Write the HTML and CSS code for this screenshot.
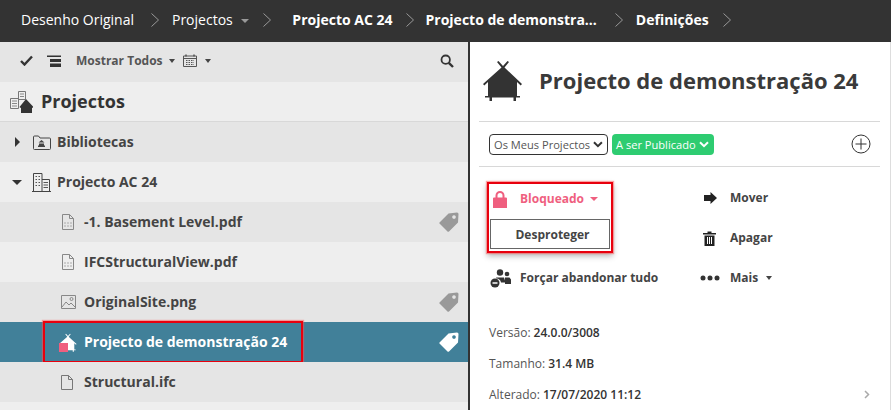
FILE: index.html
```html
<!DOCTYPE html>
<html lang="pt">
<head>
  <meta charset="UTF-8">
  <title>Projecto de demonstração 24</title>
  <link rel="stylesheet" href="styles.css">
</head>
<body>
  <svg class="defs" width="0" height="0">
    <symbol id="hut" viewBox="0 0 40 41">
      <path d="M14 2l1.500-1L20 6l4.500-5L26 2l-4.500 5.500L39 24l-1.300 1.500L34 22v14h3v1.500h-4V41h-2.500v-3.500H9V41H6.500v-3.500H2V36h3V22l-3.700 3.500L0 24 18.500 7.500z"/>
    </symbol>
    <symbol id="tag" viewBox="0 0 20 20">
      <path fill-rule="evenodd" d="M9.500 1.500L18 .5Q19.500.5 19.500 2L19 10.500 10 19.500Q9 20 8.500 19.500L.5 11.500Q0 11 .5 10.500zM15 3.200a1.800 1.800 0 1 0 .01 0z"/>
    </symbol>
    <symbol id="pdf" viewBox="0 0 14 16">
      <path d="M1.500.5h7l4 4v11h-11zM8.500.5v4h4" fill="none" stroke="#888"/>
      <path d="M3 9h8M3 12h8" stroke="#aaa" stroke-dasharray="2 1"/>
    </symbol>
    <symbol id="chev" viewBox="0 0 8 14">
      <path d="M.5.500L7.500 7 .5 13.500" fill="none" stroke="#999"/>
    </symbol>
  </svg>

  <nav class="crumbs">
    <span class="crumb">Desenho Original</span>
    <svg class="sep sep-wide" width="8" height="14"><use href="#chev"/></svg>
    <span class="crumb">Projectos <i class="caret caret-grey"></i></span>
    <svg class="sep sep-next" width="8" height="14"><use href="#chev"/></svg>
    <span class="crumb crumb-b">Projecto AC 24</span>
    <svg class="sep sep-tight" width="8" height="14"><use href="#chev"/></svg>
    <span class="crumb crumb-b">Projecto de demonstra...</span>
    <svg class="sep sep-wide sep-last" width="8" height="14"><use href="#chev"/></svg>
    <span class="crumb crumb-b">Definições</span>
    <svg class="sep" width="8" height="14"><use href="#chev"/></svg>
  </nav>

  <main class="main">
    <section class="left">
      <div class="toolbar">
        <svg class="tool-check" width="13" height="11" viewBox="0 0 13 11"><path d="M1 6l3.500 3.500L12 1.500" fill="none" stroke="#333" stroke-width="2.400"/></svg>
        <svg class="tool-list" width="14" height="12" viewBox="0 0 14 12"><path d="M0 .5h14V2H0zM3 4h11v3H3zM3 8.500h11V12H3z" fill="#333"/></svg>
        <span class="tool-label">Mostrar Todos</span><i class="caret caret-dark"></i>
        <svg class="tool-cal" width="14" height="13" viewBox="0 0 14 13"><path d="M.5 2h13v10.500H.5zM.5 4.500h13" fill="none" stroke="#555"/><path d="M3 .5v2M11 .5v2" stroke="#555" stroke-width="1.500"/><path d="M3 6.500h8M3 8.500h8M3 10.500h8" stroke="#555" stroke-dasharray="1.500 1"/></svg>
        <i class="caret caret-dark"></i>
        <svg class="tool-search" width="14" height="14" viewBox="0 0 14 14"><circle cx="5.700" cy="5.700" r="4.200" fill="none" stroke="#333" stroke-width="1.800"/><path d="M8.800 8.800L13 13" stroke="#333" stroke-width="2.400"/></svg>
      </div>

      <div class="tree-title">
        <svg width="24" height="24" viewBox="0 0 24 24"><path d="M1.500 8.500h8v10h-8zM9.500 1.500h7v8h-7z" fill="#eee" stroke="#777"/><path d="M3 11h5M3 13.500h5M3 16h5M11 4h4M11 6.500h4" stroke="#888"/><path d="M17 9l7.500 8-1 1-.5-.500V23H12v-5.500l-.5.500-1-1z" fill="#333"/></svg>
        <span>Projectos</span>
      </div>

      <ul class="tree">
        <li class="row row-d">
          <i class="tri-right"></i>
          <svg class="row-icon" width="19" height="15" viewBox="0 0 19 15"><path d="M2.500 1h4l1.500 2h9.500a1 1 0 0 1 1 1v9.500a1 1 0 0 1-1 1h-15a1 1 0 0 1-1-1v-11.500a1 1 0 0 1 1-1z" fill="none" stroke="#444"/><path d="M9.500 5l3 2.500h-6zM7 8.500h5v2H7zM6 10.500h7V12H6z" fill="#444"/></svg>
          <span class="row-text">Bibliotecas</span>
        </li>
        <li class="row row-l">
          <i class="tri-down"></i>
          <svg class="row-icon row-icon-tall" width="19" height="19" viewBox="0 0 19 19"><path d="M1.500 18V.5h8.500V18M10 6.500h7.500V18M0 18.500h19" fill="none" stroke="#444"/><path d="M3.500 3.500h1.500M6.500 3.500H8M3.500 6.500h1.500M6.500 6.500H8M3.500 9.500h1.500M6.500 9.500H8M3.500 12.500h1.500M6.500 12.500H8M11.500 9.500h4.500M11.500 12h4.500M11.500 14.500h4.500" stroke="#555"/></svg>
          <span class="row-text">Projecto AC 24</span>
        </li>
        <li class="row row-d row-file">
          <svg class="file-icon" width="14" height="16"><use href="#pdf"/></svg>
          <span class="row-text">-1. Basement Level.pdf</span>
          <svg class="row-tag" width="20" height="20"><use href="#tag"/></svg>
        </li>
        <li class="row row-l row-file">
          <svg class="file-icon" width="14" height="16"><use href="#pdf"/></svg>
          <span class="row-text">IFCStructuralView.pdf</span>
        </li>
        <li class="row row-d row-file">
          <svg class="file-icon" width="15" height="14" viewBox="0 0 15 14"><path d="M.5.500h14v13H.5z" fill="none" stroke="#888"/><path d="M1 12l4-5 3 3 2-2 4 4" fill="none" stroke="#888"/><circle cx="10.500" cy="4" r="1.500" fill="none" stroke="#888"/></svg>
          <span class="row-text">OriginalSite.png</span>
          <svg class="row-tag" width="20" height="20"><use href="#tag"/></svg>
        </li>
        <li class="row row-sel row-file">
          <div class="sel-icon">
            <svg width="18" height="19"><use href="#hut"/></svg>
            <i class="lock-mark"></i>
          </div>
          <span class="row-text">Projecto de demonstração 24</span>
          <svg class="row-tag" width="20" height="20"><use href="#tag"/></svg>
          <div class="mark mark-row"></div>
        </li>
        <li class="row row-d row-file">
          <svg class="file-icon" width="12" height="15" viewBox="0 0 12 15"><path d="M.5.500h7l4 4v10h-11zM7.500.500v4h4" fill="none" stroke="#777"/></svg>
          <span class="row-text">Structural.ifc</span>
        </li>
        <li class="row row-l row-rest"></li>
      </ul>
    </section>

    <section class="right">
      <header class="head">
        <svg class="head-icon" width="40" height="41"><use href="#hut"/></svg>
        <h1>Projecto de demonstração 24</h1>
      </header>

      <div class="filters">
        <span class="pill pill-outline">Os Meus Projectos <svg width="10" height="7" viewBox="0 0 10 7"><path d="M1 1.200l4 4 4-4" fill="none" stroke="#333" stroke-width="2"/></svg></span>
        <span class="pill pill-green">A ser Publicado <svg width="10" height="7" viewBox="0 0 10 7"><path d="M1 1.200l4 4 4-4" fill="none" stroke="#fff" stroke-width="2"/></svg></span>
        <svg class="plus" width="20" height="20" viewBox="0 0 20 20"><circle cx="10" cy="10" r="9" fill="none" stroke="#333"/><path d="M4.500 10h11M10 4.500v11" stroke="#333"/></svg>
      </div>

      <div class="actions">
        <div class="col col-a">
          <div class="lock-box">
            <div class="act act-lock">
              <svg class="act-icon" width="14" height="17" viewBox="0 0 14 17"><path d="M3.500 7V4.500a3.500 3.500 0 0 1 7 0V7" fill="none" stroke="#ef5f7f" stroke-width="2"/><path d="M1 6.500h12a1 1 0 0 1 1 1V17H0V7.500a1 1 0 0 1 1-1z" fill="#ef5f7f"/></svg>
              <span>Bloqueado</span><i class="caret caret-pink"></i>
            </div>
            <div class="unlock">Desproteger</div>
          </div>
          <div class="act act-force">
            <svg class="act-icon" width="21" height="19" viewBox="0 0 21 19"><circle cx="10" cy="3.500" r="3.200" fill="#333"/><circle cx="17" cy="5" r="2.300" fill="#333"/><path d="M6 8.500h8l1 3v2H11a5 5 0 0 0-4.500-4zM15 8.500h4.500l1.500 2V15h-6z" fill="#333"/><circle cx="5" cy="14" r="4.500" fill="#333"/><path d="M2.500 14h5" stroke="#fff" stroke-width="1.500"/></svg>
            <span>Forçar abandonar tudo</span>
          </div>
        </div>
        <div class="col col-b">
          <div class="act"><svg class="act-icon" width="13" height="12" viewBox="0 0 13 12"><path d="M0 3h6.500V0L13 6l-6.500 6V9H0z" fill="#222"/></svg><span>Mover</span></div>
          <div class="act"><svg class="act-icon" width="13" height="15" viewBox="0 0 13 15"><path d="M0 2h4.500V.500h4V2H13v1.500H0z" fill="#222"/><path d="M1.500 4.500h10V15h-10z" fill="#222"/><path d="M4.500 6v7M6.500 6v7M8.500 6v7" stroke="#fff"/></svg><span>Apagar</span></div>
          <div class="act"><svg class="act-icon" width="20" height="6" viewBox="0 0 20 6"><circle cx="3" cy="3" r="2.500" fill="#333"/><circle cx="10" cy="3" r="2.500" fill="#333"/><circle cx="17" cy="3" r="2.500" fill="#333"/></svg><span>Mais</span><i class="caret caret-dark"></i></div>
        </div>
      </div>

      <dl class="meta">
        <div class="meta-row">Versão: <b>24.0.0/3008</b></div>
        <div class="meta-row">Tamanho: <b>31.4 MB</b></div>
        <div class="meta-row">Alterado: <b>17/07/2020 11:12</b><svg class="more" width="6" height="9" viewBox="0 0 6 9"><path d="M1 1l3.500 3.500L1 8" fill="none" stroke="#aaa" stroke-width="1.500"/></svg></div>
      </dl>
    </section>
  </main>
</body>
</html>
```

FILE: styles.css
```css
* {
  box-sizing: border-box;
}
html, body {
  margin: 0;
  height: 100%;
  overflow: hidden;
}
body {
  font-family: "Open Sans", "Liberation Sans", sans-serif;
  color: #333;
  background: #fff;
}
.defs {
  position: absolute;
}
.crumbs {
  height: 42px;
  background: #333;
  color: #fff;
  display: flex;
  align-items: center;
  padding: 0 0 3px 21px;
  font-size: 14px;
  white-space: nowrap;
}
.crumb-b {
  font-weight: 700;
}
.sep {
  flex: none;
  margin: 1px 14px 0;
}
.sep-wide {
  margin-left: 17px;
  margin-right: 13px;
}
.sep-last {
  margin-left: 18px;
}
.sep-next {
  margin-right: 21px;
}
.sep-tight {
  margin-left: 13px;
  margin-right: 12px;
}
.caret {
  display: inline-block;
  width: 0;
  height: 0;
  border-left: 4px solid transparent;
  border-right: 4px solid transparent;
}
.caret-grey {
  border-top: 4px solid #999;
  margin: 0 0 2px 5px;
}
.caret-dark {
  border-left-width: 3.500px;
  border-right-width: 3.500px;
  border-top: 4px solid #444;
}
.caret-pink {
  border-top: 4px solid #ef5f7f;
  margin-left: 6px;
}
.main {
  display: flex;
  height: 368px;
  overflow: hidden;
}
.left {
  width: 470px;
  flex: none;
  border-right: 2px solid #333;
}
.toolbar {
  height: 40px;
  background: #e5e5e5;
  display: flex;
  align-items: center;
  padding: 0 0 3px 20px;
}
.tool-list {
  margin-left: 14px;
}
.tool-label {
  margin: 0 6px 0 15px;
  font-size: 12px;
  font-weight: 700;
  color: #555;
}
.tool-cal {
  margin: 0 8px 0 8px;
}
.tool-search {
  margin-left: auto;
  margin-right: 14px;
}
.tree-title {
  height: 40px;
  background: #eee;
  border-bottom: 1px solid #d8d8d8;
  display: flex;
  align-items: center;
  padding-left: 9px;
  font-size: 18px;
  font-weight: 700;
}
.tree-title span {
  margin: 0 0 2px 8px;
}
.tree {
  list-style: none;
  margin: 0;
  padding: 0;
}
.row {
  position: relative;
  height: 40px;
  display: flex;
  align-items: center;
  padding-left: 13px;
  font-size: 14px;
  font-weight: 700;
  color: #444;
}
.row-d {
  background: #e5e5e5;
}
.row-l {
  background: #eee;
}
.row-rest {
  height: 8px;
}
.row-sel {
  background: #418099;
  color: #fff;
}
.row-file {
  display: grid;
  grid-template-columns: 24px 1fr auto;
  padding-left: 60px;
}
.row-text {
  margin: 0 0 2px 6px;
}
.row-file .row-text {
  margin-left: 0;
}
.file-icon {
  margin-left: 1px;
}
.row-tag {
  margin-right: 9px;
  fill: #999;
}
.row-sel .row-tag {
  fill: #fff;
}
.tri-right {
  width: 0;
  height: 0;
  margin-left: 2px;
  border-top: 5px solid transparent;
  border-bottom: 5px solid transparent;
  border-left: 5px solid #333;
}
.tri-down {
  width: 0;
  height: 0;
  margin-left: -1px;
  border-left: 5px solid transparent;
  border-right: 5px solid transparent;
  border-top: 5px solid #333;
}
.row-icon {
  margin-left: 12px;
}
.row-icon-tall {
  margin-left: 10px;
}
.sel-icon {
  position: relative;
  margin-left: -1px;
  width: 18px;
  height: 19px;
  fill: #fff;
}
.lock-mark {
  position: absolute;
  left: 0;
  bottom: 0;
  width: 9px;
  height: 9px;
  background: #ef5f7f;
}
.mark {
  position: absolute;
  border: 2px solid #e8000d;
  box-shadow: 0 0 1px 1px rgba(255, 80, 80, .5);
}
.mark-row {
  left: 43px;
  top: -1px;
  width: 260px;
  height: 42px;
}
.right {
  flex: 1;
  padding: 0 10px 0 9px;
  border-right: 1px solid #ddd;
  min-width: 0;
}
.head {
  height: 80px;
  display: flex;
  align-items: center;
  padding: 0 0 3px 4px;
  border-bottom: 1px solid #d8d8d8;
  fill: #333;
}
.head h1 {
  margin: 0 0 0 16px;
  font-size: 22px;
  font-weight: 700;
  color: #3a3a3a;
  white-space: nowrap;
}
.filters {
  height: 45px;
  display: flex;
  align-items: center;
  padding-left: 10px;
  gap: 4px;
  border-bottom: 1px solid #d8d8d8;
}
.pill {
  height: 21px;
  border-radius: 4px;
  display: inline-flex;
  align-items: center;
  gap: 3px;
  padding: 0 4px;
  font-size: 11.100px;
  white-space: nowrap;
}
.pill-outline {
  width: 119px;
  border: 1px solid #333;
  color: #555;
}
.pill-green {
  width: 102px;
  background: #2ecc71;
  color: #fff;
  font-weight: 500;
}
.plus {
  margin-left: auto;
  margin-right: 9px;
}
.actions {
  display: flex;
  padding: 15px 0 0 10px;
}
.col-a {
  width: 211px;
}
.col-b {
  margin-top: -4px;
}
.act {
  height: 40px;
  display: flex;
  align-items: center;
  font-size: 12px;
  font-weight: 700;
  color: #444;
}
.act span {
  margin-bottom: 1px;
}
.act-icon {
  flex: none;
}
.lock-box {
  width: 126px;
  height: 71px;
  margin: 0 0 5px -2px;
  border: 2px solid #e8000d;
  box-shadow: 0 0 1px 1px rgba(255, 80, 80, .5), 0 3px 6px rgba(0, 0, 0, .3);
  padding: 0 1px;
  background: #fff;
}
.act-lock {
  height: 35px;
  padding: 0 0 5px 3px;
  color: #ef5f7f;
}
.act-lock span {
  margin-left: 13px;
}
.unlock {
  height: 30px;
  border: 1px solid #666;
  display: flex;
  align-items: center;
  justify-content: center;
  padding-left: 5px;
  font-size: 12px;
  font-weight: 700;
  color: #444;
}
.act-force .act-icon {
  margin-right: 9px;
}
.col-a .act-force {
  padding-left: 1px;
}
.col-b .act {
  width: 130px;
}
.col-b .act:nth-child(1) .act-icon {
  margin: 0 13px 0 4px;
}
.col-b .act:nth-child(2) .act-icon {
  margin: 0 14px 0 3px;
}
.col-b .act:nth-child(3) .act-icon {
  margin-right: 10px;
}
.col-b .caret {
  margin-left: 8px;
}
.meta {
  margin: 19px 0 0 10px;
  font-size: 12px;
  color: #555;
}
.meta-row {
  height: 31px;
  display: flex;
  align-items: center;
  gap: 3px;
}
.meta-row b {
  color: #333;
  font-weight: 600;
}
.more {
  margin: 0 10px 0 auto;
}
```
